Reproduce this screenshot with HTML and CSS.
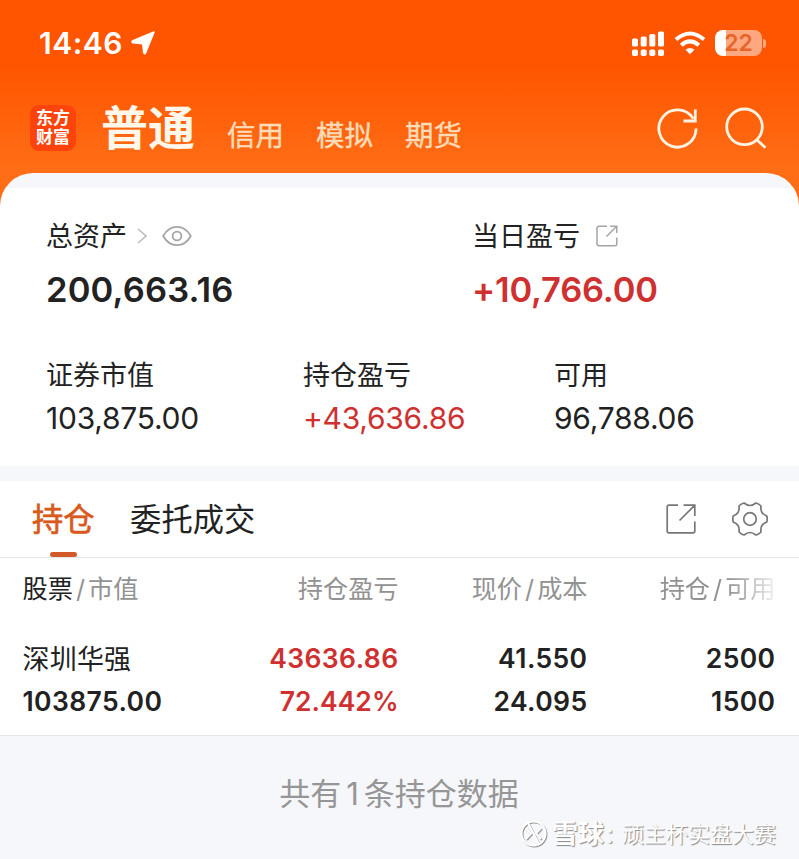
FILE: index.html
```html
<!DOCTYPE html>
<html lang="zh-CN">
<head>
    <meta charset="UTF-8">
    <meta name="viewport" content="width=device-width, initial-scale=1.0">
    <title>东方财富 - 持仓</title>
    <link rel="stylesheet" href="styles.css">
</head>
<body>

    <div class="header">
        <div class="status-bar">
            <span class="time">14:46</span>
            <svg class="location" width="26" height="26" viewBox="0 0 26 26"><path d="M24 2 L15.5 23 Q14.5 24.5 13.7 22.5 L12.8 13.6 L3 12.8 Q1 12 3 10.8 Z" fill="#fff" stroke="#fff" stroke-width="1.6" stroke-linejoin="round"/></svg>
            <div class="status-icons">
                <svg width="33" height="26" viewBox="0 0 33 26" fill="#fff">
                    <rect x="0" y="8.5" width="6" height="8" rx="1.5"/>
                    <rect x="8.7" y="6.5" width="6" height="10" rx="1.5"/>
                    <rect x="17.3" y="4" width="6" height="12.5" rx="1.5"/>
                    <rect x="26" y="1.5" width="6" height="15" rx="1.5"/>
                    <rect x="0" y="19.5" width="6" height="6.5" rx="1.8"/>
                    <rect x="8.7" y="19.5" width="6" height="6.5" rx="1.8"/>
                    <rect x="17.3" y="19.5" width="6" height="6.5" rx="1.8"/>
                    <rect x="26" y="19.5" width="6" height="6.5" rx="1.8"/>
                </svg>
                <svg class="wifi" width="32" height="24" viewBox="0 0 32 24" fill="none" stroke="#fff" stroke-width="4">
                    <path d="M2 8.6 Q16 -3.6 30 8.6"/>
                    <path d="M7.2 14.2 Q16 6.4 24.8 14.2"/>
                    <path d="M16 23.2 L11.5 18.8 Q16 15.4 20.5 18.8 Z" fill="#fff" stroke="none"/>
                </svg>
                <div class="battery"><span>22</span></div>
                <i class="battery-tip"></i>
            </div>
        </div>

        <div class="nav">
            <div class="logo">东方<br>财富</div>
            <span class="nav-item active">普通</span>
            <span class="nav-item">信用</span>
            <span class="nav-item">模拟</span>
            <span class="nav-item">期货</span>
            <div class="nav-icons">
                <svg width="42" height="44" viewBox="0 0 42 44" fill="none" stroke="#fff3e4" stroke-width="2.8">
                    <path d="M36.3 12.7 A18.6 18.6 0 1 0 39.1 22.5"/>
                    <path d="M38.3 3.5 V15 H26.5"/>
                </svg>
                <svg width="42" height="44" viewBox="0 0 42 44" fill="none" stroke="#fff3e4" stroke-width="2.8">
                    <circle cx="19.5" cy="20.8" r="17.8"/>
                    <path d="M31.5 33.5 L40.5 41.8"/>
                </svg>
            </div>
        </div>
    </div>

    <div class="sheet">
        <div class="assets">
            <div class="total">
                <div class="label">总资产
                    <svg class="chevron" width="10" height="16" viewBox="0 0 10 16" fill="none" stroke="#bbb" stroke-width="1.6"><path d="M1 1 L9 8 L1 15"/></svg>
                    <svg class="eye" width="30" height="22" viewBox="0 0 30 22" fill="none" stroke="#a5a5a5" stroke-width="1.8"><path d="M1.2 11 C8 -1.2 22 -1.2 28.8 11 C22 23.2 8 23.2 1.2 11 Z"/><circle cx="15" cy="11" r="4.4"/></svg>
                </div>
                <div class="big wide">200,663.16</div>
            </div>
            <div class="today">
                <div class="label">当日盈亏
                    <svg class="share-small" width="22" height="22" viewBox="0 0 22 22" fill="none" stroke="#a5a5a5" stroke-width="1.5"><path d="M11 1.2 H3 Q1 1.2 1 3.2 V18.8 Q1 20.8 3 20.8 H18.8 Q20.8 20.8 20.8 18.8 V12.5 M14.2 1.2 H20.8 V8 M20.8 1.2 L10.5 11.5"/></svg>
                </div>
                <div class="big red">+10,766.00</div>
            </div>
        </div>
        <div class="details">
            <div class="detail"><div class="label">证券市值</div><div class="value">103,875.00</div></div>
            <div class="detail"><div class="label">持仓盈亏</div><div class="value red">+43,636.86</div></div>
            <div class="detail"><div class="label">可用</div><div class="value">96,788.06</div></div>
        </div>
    </div>

    <div class="tabs">
        <span class="tab active">持仓</span>
        <span class="tab">委托成交</span>
        <div class="tab-icons">
            <svg width="30" height="30" viewBox="0 0 30 30" fill="none" stroke="#777" stroke-width="1.7"><path d="M12 1.2 H3 Q1.2 1.2 1.2 3 V27 Q1.2 28.8 3 28.8 H27 Q28.8 28.8 28.8 27 V17.5 M17.5 1.2 H28.8 V12 M28.8 1.2 L13.5 16.5"/></svg>
            <svg width="36" height="36" viewBox="0 0 36 36" fill="none" stroke="#777" stroke-width="1.7" stroke-linejoin="round">
                <path d="M12.1 2 C14.5 3.9 15.8 4.5 18 4.5 C20.2 4.5 21.5 3.9 23.9 2 Q27 2.8 29 5 C28.6 8 28.8 9.5 29.8 11.2 C30.9 13 32.2 13.9 34.8 15 Q35.6 18 34.8 21 C32.2 22.1 30.9 23 29.8 24.8 C28.8 26.5 28.6 28 29 31 Q27 33.2 23.9 34 C21.5 32.1 20.2 31.5 18 31.5 C15.8 31.5 14.5 32.1 12.1 34 Q9 33.2 7 31 C7.4 28 7.2 26.5 6.2 24.8 C5.1 23 3.8 22.1 1.2 21 Q0.4 18 1.2 15 C3.8 13.9 5.1 13 6.2 11.2 C7.2 9.5 7.4 8 7 5 Q9 2.8 12.1 2 Z"/>
                <circle cx="18" cy="18" r="6.3"/>
            </svg>
        </div>
    </div>

    <div class="table">
        <div class="row head">
            <div><b>股票</b><i>/</i>市值</div>
            <div>持仓盈亏</div>
            <div>现价<i>/</i>成本</div>
            <div class="fade">持仓<i>/</i>可用</div>
        </div>
        <div class="row">
            <div class="name">深圳华强</div>
            <div class="red">43636.86</div>
            <div>41.550</div>
            <div>2500</div>
        </div>
        <div class="row">
            <div>103875.00</div>
            <div class="red percent">72.442%</div>
            <div>24.095</div>
            <div>1500</div>
        </div>
    </div>

    <div class="footer">
        <div class="summary">共有<span>1</span>条持仓数据</div>
        <div class="watermark">
            <svg width="28" height="28" viewBox="0 0 28 28" fill="none">
                <g stroke="#999" stroke-width="2"><circle cx="14.5" cy="14.5" r="12"/><path d="M7 9 L12 14.5 L7 20 M22 9 L17 14.5 L22 20 M9 4 L20 25"/></g>
                <g stroke="#fff" stroke-width="2"><circle cx="13.5" cy="13.5" r="12"/><path d="M6 8 L11 13.5 L6 19 M21 8 L16 13.5 L21 19 M8 3 L19 24"/></g>
            </svg>
            <span class="brand">雪球<span class="colon">:</span></span>
            <span class="author">顽主杯实盘大赛</span>
        </div>
    </div>

</body>
</html>
```
FILE: styles.css
```css
* {
    box-sizing: border-box;
}
body {
    margin: 0;
    width: 799px;
    height: 859px;
    overflow: hidden;
    background: #fff;
    color: #222;
    font-family: Inter, 'Noto Sans CJK SC', sans-serif;
}
svg {
    display: block;
    flex: none;
}
i {
    font-style: normal;
}
.red {
    color: #cf3030;
}

/* Orange header */
.header {
    height: 213px;
    background: linear-gradient(#ff5500 0, #ff5500 65px, #ff6e16 172px);
}
.status-bar {
    height: 86px;
    display: flex;
    align-items: center;
    padding: 0 33px 0 39px;
    color: #fff;
}
.time {
    font-size: 30px;
    font-weight: 600;
    letter-spacing: 0.5px;
}
.location {
    margin-left: 7px;
}
.status-icons {
    margin-left: auto;
    display: flex;
    align-items: center;
}
.wifi {
    margin: 0 9px 1px 9px;
}
.battery {
    width: 47px;
    height: 26px;
    border-radius: 8px;
    background: linear-gradient(90deg, #fff 11px, #ffa880 11px);
    color: #e8652a;
    font-size: 23px;
    font-weight: 600;
    line-height: 26px;
    text-align: center;
}
.battery-tip {
    width: 3px;
    height: 9px;
    margin-left: 1px;
    border-radius: 0 4px 4px 0;
    background: #ffa880;
}
.nav {
    height: 84px;
    display: flex;
    align-items: center;
    padding: 0 32px 0 30px;
}
.logo {
    width: 46px;
    height: 46px;
    margin-right: 25px;
    border-radius: 9px;
    background: #ff430c;
    color: #fff;
    font-size: 17px;
    font-weight: 700;
    line-height: 19px;
    text-align: center;
    padding-top: 4px;
}
.nav-item {
    font-size: 28.5px;
    line-height: 40px;
    color: #ffdcb8;
    -webkit-text-stroke: 0.4px #ffdcb8;
    margin-right: 32px;
    padding-top: 15px;
}
.nav-item.active {
    font-size: 47px;
    font-weight: 700;
    line-height: 56px;
    color: #fff7ea;
    -webkit-text-stroke: 0;
    padding-top: 0;
}
.nav-icons {
    margin-left: auto;
    display: flex;
    gap: 26px;
}

/* Account summary */
.sheet {
    height: 293px;
    margin-top: -40px;
    padding: 45px 46px 0;
    border-radius: 33px 33px 0 0;
    background: linear-gradient(#f5f7fa 15px, #fff 15px);
}
.label {
    display: flex;
    align-items: center;
    height: 36px;
    font-size: 27px;
    line-height: 36px;
}
.label svg {
    margin-bottom: 2px;
}
.chevron {
    margin-left: 10px;
}
.eye {
    margin-left: 15px;
}
.share-small {
    margin-left: 16px;
}
.assets {
    display: flex;
    height: 140px;
}
.assets .label {
    padding-top: 1px;
}
.total {
    width: 426px;
}
.big {
    margin-top: 14px;
    font-size: 34.5px;
    font-weight: 600;
    line-height: 43px;
    letter-spacing: -0.2px;
}
.big.wide {
    letter-spacing: 0.15px;
}
.details {
    display: grid;
    grid-template-columns: 257px 251px 1fr;
}
.value {
    margin-top: 5px;
    font-size: 30px;
    line-height: 38px;
    letter-spacing: -0.25px;
}

/* Tabs */
.tabs {
    height: 92px;
    display: flex;
    border-top: 15px solid #f5f7fa;
    border-bottom: 1px solid #e6e6e6;
    padding: 0 31px 0 32px;
}
.tab {
    position: relative;
    margin-right: 35.5px;
    font-size: 31.3px;
    line-height: 78px;
}
.tab.active {
    color: #d85a1c;
    -webkit-text-stroke: 0.7px #d85a1c;
}
.tab.active::after {
    content: '';
    position: absolute;
    left: 18px;
    bottom: 0;
    width: 27px;
    height: 5px;
    border-radius: 3px;
    background: #d2592a;
}
.tab-icons {
    margin-left: auto;
    display: flex;
    align-items: center;
    gap: 36px;
}

/* Positions */
.table {
    height: 178px;
    border-bottom: 1px solid #e6e6e6;
}
.row {
    display: grid;
    grid-template-columns: 190px 186px 189px 188px;
    padding: 0 23px 0 22.5px;
    height: 43px;
    line-height: 43px;
    font-size: 26.5px;
    font-weight: 600;
    letter-spacing: 0.4px;
}
.row > div + div {
    text-align: right;
}
.row .percent {
    letter-spacing: 0;
}
.row.head {
    height: 79px;
    line-height: 63px;
    font-size: 25.2px;
    font-weight: 400;
    letter-spacing: 0;
    color: #929292;
}
.row.head b {
    font-weight: 400;
    color: #222;
}
.row.head i {
    margin: 0 3px;
}
.row .name {
    font-size: 27px;
    font-weight: 400;
    letter-spacing: 0.2px;
    padding-top: 1px;
}
.fade {
    -webkit-mask-image: linear-gradient(90deg, #000 140px, transparent 195px);
    mask-image: linear-gradient(90deg, #000 140px, transparent 195px);
}

/* Footer */
.footer {
    height: 123px;
    background: #f5f7fa;
    padding: 36px 23px 0 22px;
}
.summary {
    font-size: 31px;
    line-height: 44px;
    text-align: center;
    color: #969696;
}
.summary span {
    margin: 0 5px;
}
.watermark {
    display: flex;
    align-items: center;
    justify-content: flex-end;
    height: 36px;
    color: #fff;
    text-shadow: 1px 1px 1px #888;
}
.brand {
    width: 70px;
    margin-left: 4px;
    font-size: 26px;
    font-weight: 700;
    line-height: 34px;
    white-space: nowrap;
}
.colon {
    margin-left: 2px;
    font-weight: 400;
}
.author {
    font-size: 22px;
    line-height: 34px;
}
```
